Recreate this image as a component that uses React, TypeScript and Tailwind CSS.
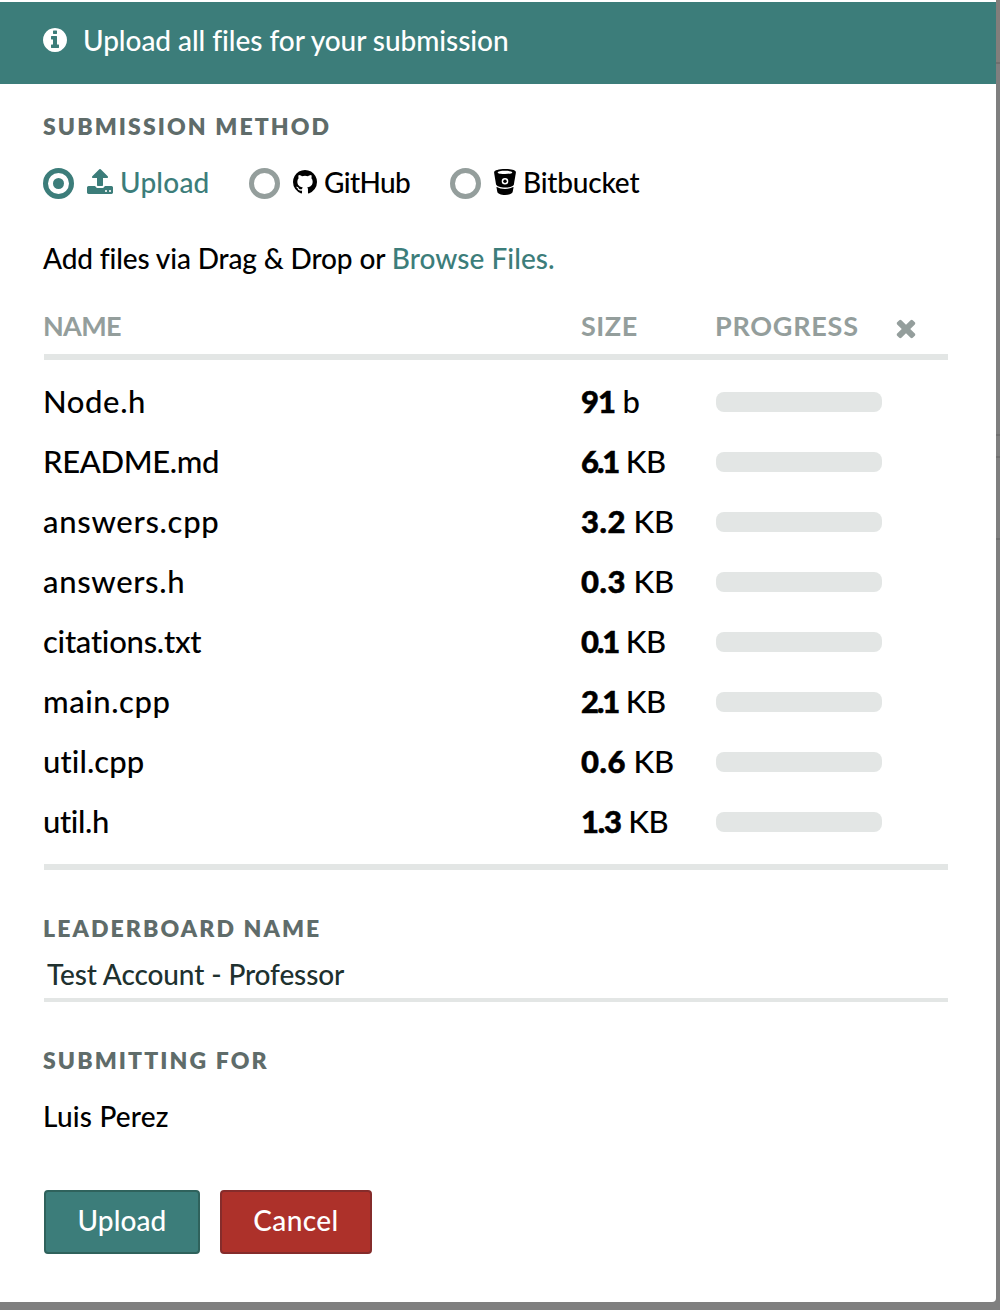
import type { ReactNode } from "react";

const ICONS = {
  info: "M1152 1376v-160q0-14-9-23t-23-9h-96v-512q0-14-9-23t-23-9h-320q-14 0-23 9t-9 23v160q0 14 9 23t23 9h96v320h-96q-14 0-23 9t-9 23v160q0 14 9 23t23 9h448q14 0 23-9t9-23zm-128-896v-160q0-14-9-23t-23-9h-192q-14 0-23 9t-9 23v160q0 14 9 23t23 9h192q14 0 23-9t9-23zm640 416q0 209-103 385.5t-279.5 279.5-385.5 103-385.5-103-279.5-279.5-103-385.5 103-385.5 279.5-279.5 385.5-103 385.5 103 279.5 279.5 103 385.5z",
  upload:
    "M1344 1472q0-26-19-45t-45-19-45 19-19 45 19 45 45 19 45-19 19-45zm256 0q0-26-19-45t-45-19-45 19-19 45 19 45 45 19 45-19 19-45zm128-224v320q0 40-28 68t-68 28h-1472q-40 0-68-28t-28-68v-320q0-40 28-68t68-28h427q21 56 70.5 92t110.5 36h256q61 0 110.5-36t70.5-92h427q40 0 68 28t28 68zm-325-648q-17 40-59 40h-256v448q0 26-19 45t-45 19h-256q-26 0-45-19t-19-45v-448h-256q-42 0-59-40-17-39 14-69l448-448q18-19 45-19t45 19l448 448q31 30 14 69z",
  github:
    "M896 128q209 0 385.5 103t279.5 279.5 103 385.5q0 251-146.5 451.5t-378.5 277.5q-27 5-40-7t-13-30q0-3 .5-76.5t.5-134.5q0-97-52-142 57-6 102.5-18t94-39 81-66.5 53-105 20.5-150.5q0-119-79-206 37-91-8-204-28-9-81 11t-92 44l-38 24q-93-26-192-26t-192 26q-16-11-42.5-27t-83.5-38.5-85-13.5q-45 113-8 204-79 87-79 206 0 85 20.5 150t52.5 105 80.5 67 94 39 102.5 18q-39 36-49 103-21 10-45 15t-57 5-65.5-21.5-55.5-62.5q-19-32-48.5-52t-49.5-24l-20-3q-21 0-29 4.5t-5 11.5 9 14 13 12l7 5q22 10 43.5 38t31.5 51l10 23q13 38 44 61.5t67 30 69.5 7 55.5-3.5l23-4q0 38 .5 88.5t.5 54.5q0 18-13 30t-40 7q-232-77-378.5-277.5t-146.5-451.5q0-209 103-385.5t279.5-279.5 385.5-103z",
  times:
    "M1490 1322q0 40-28 68l-136 136q-28 28-68 28t-68-28l-294-294-294 294q-28 28-68 28t-68-28l-136-136q-28-28-28-68t28-68l294-294-294-294q-28-28-28-68t28-68l136-136q28-28 68-28t68 28l294 294 294-294q28-28 68-28t68 28l136 136q28 28 28 68t-28 68l-294 294 294 294q28 28 28 68z",
};

function Icon({ name, className }: { name: keyof typeof ICONS; className?: string }) {
  return (
    <svg viewBox="0 0 1792 1792" className={`size-7 shrink-0 fill-current ${className ?? ""}`}>
      <path d={ICONS[name]} />
    </svg>
  );
}

function BucketIcon() {
  return (
    <svg viewBox="0 0 22 26" className="mb-0.5 h-[26px] w-[22px] shrink-0">
      <path
        fillRule="evenodd"
        fill="currentColor"
        d="M11 0C5 0 .1 1.300 .1 3.300c0 .9 1.600 9.700 2 12.200.3 1.500 4 3.100 8.900 3.100s8.600-1.600 8.900-3.100c.4-2.500 2-11.300 2-12.200C21.900 1.300 17 0 11 0zm0 1.800c4 0 7.300.7 7.300 1.600S15 5 11 5s-7.300-.7-7.300-1.600S7 1.800 11 1.800zM11 9a3.300 3.300 0 1 1 0 6.600A3.300 3.300 0 0 1 11 9z"
      />
      <circle cx="11" cy="12.300" r="1.700" fill="currentColor" />
      <path fill="currentColor" d="M2.900 18.100c2 1.200 4.900 1.900 8.100 1.900s6.100-.7 8.100-1.900c.3 0 .5.200.4.500l-.8 4.100c-.2 1.900-3.600 3.200-7.700 3.200s-7.500-1.300-7.700-3.200l-.8-4.100c-.1-.3.100-.5.400-.5z" />
    </svg>
  );
}

function Radio({ checked = false }: { checked?: boolean }) {
  return (
    <span
      className={`flex size-[31px] shrink-0 items-center justify-center rounded-full border-5 ${
        checked ? "border-[#3c7d7a]" : "border-[#949e9c]"
      }`}
    >
      {checked && <span className="size-[11px] rounded-full bg-[#3c7d7a]" />}
    </span>
  );
}

function Heading({ children, className }: { children: ReactNode; className: string }) {
  return <h2 className={`h-8 text-[23px] leading-8 font-extrabold tracking-[2.100px] text-[#5f6c6a] ${className}`}>{children}</h2>;
}

const FILES = [
  { name: "Node.h", size: "91", unit: "b", track: "tracking-[0.6px]", sizeTrack: "-tracking-[1px]" },
  { name: "README.md", size: "6.1", unit: "KB", track: "-tracking-[0.350px]", sizeTrack: "-tracking-[2px]" },
  { name: "answers.cpp", size: "3.2", unit: "KB", track: "tracking-[0.7px]", sizeTrack: "tracking-[0.600px]" },
  { name: "answers.h", size: "0.3", unit: "KB", track: "tracking-[0.65px]", sizeTrack: "tracking-[0.600px]" },
  { name: "citations.txt", size: "0.1", unit: "KB", track: "-tracking-[0.250px]", sizeTrack: "-tracking-[2px]" },
  { name: "main.cpp", size: "2.1", unit: "KB", track: "tracking-[0.550px]", sizeTrack: "-tracking-[2px]" },
  { name: "util.cpp", size: "0.6", unit: "KB", track: "tracking-[0.1px]", sizeTrack: "tracking-[0.600px]" },
  { name: "util.h", size: "1.3", unit: "KB", track: "-tracking-[0.350px]", sizeTrack: "-tracking-[1.200px]" },
];

export default function App() {
  return (
    <div className="flex h-[1310px] w-[1000px] bg-[#7f7f7f] pb-2 font-['Lato',sans-serif] text-[28px] font-medium whitespace-nowrap text-black [font-variant-ligatures:none]">
      <main className="w-[996px] rounded-br bg-white pt-0.5">
        <header className="flex h-[82px] items-center bg-[#3c7d7a] pb-1.5 pl-[41px] text-white">
          <Icon name="info" />
          <span className="ml-3.5 -tracking-[0.050px]">Upload all files for your submission</span>
        </header>

        <div className="pt-[26px] pr-12 pl-11">
          <Heading className="-ml-px">SUBMISSION METHOD</Heading>

          <div className="-ml-px mt-[25px] flex h-8 items-center">
            <div className="flex w-[206px] items-center text-[#3c7d7a]">
              <Radio checked />
              <Icon name="upload" className="ml-3 -mt-0.5" />
              <span className="mb-0.5 ml-1.5 tracking-[0.200px]">Upload</span>
            </div>
            <div className="flex w-[201px] items-center">
              <Radio />
              <Icon name="github" className="-mt-0.5 ml-[11px]" />
              <span className="mb-0.5 ml-[5px] -tracking-[0.600px]">GitHub</span>
            </div>
            <div className="flex items-center">
              <Radio />
              <span className="ml-[13px]"><BucketIcon /></span>
              <span className="mb-0.5 ml-[7px] -tracking-[0.200px]">Bitbucket</span>
            </div>
          </div>

          <p className="-ml-px mt-[43px] h-8 leading-8 -tracking-[0.130px]">
            Add files via Drag &amp; Drop or{" "}
            <a className="tracking-[0.050px] text-[#3c7d7a]">Browse Files.</a>
          </p>

          <div className="mt-[34px] flex h-[52px] border-b-6 border-[#e3e6e5] text-[27px] leading-9 font-bold text-[#949e9c]">
            <span className="-ml-px w-[538px] -tracking-[0.700px]">NAME</span>
            <span className="w-[134px] tracking-[0.500px]">SIZE</span>
            <span className="w-[176.5px] tracking-[0.750px]">PROGRESS</span>
            <Icon name="times" className="mt-1.5" />
          </div>

          <ul className="border-b-6 border-[#e3e6e5] py-3">
            {FILES.map((f) => (
              <li key={f.name} className="flex h-[60px] items-center text-[31px]">
                <span className={`mb-px -ml-px w-[538px] ${f.track}`}>{f.name}</span>
                <span className="mb-px w-[135px]">
                  <span className={`font-black [-webkit-text-stroke:0.5px_#000] ${f.sizeTrack}`}>{f.size}</span>
                  <span className="-tracking-[0.400px]"> {f.unit}</span>
                </span>
                <span className="h-5 w-[166px] rounded-lg bg-[#e3e6e5]" />
              </li>
            ))}
          </ul>

          <Heading className="mt-[42px] -ml-px">LEADERBOARD NAME</Heading>
          <div className="mt-2 h-[50px] border-b-4 border-[#e3e6e5] pt-1.5 pl-[3px] leading-8 -tracking-[0.120px] text-[#20312f]">
            Test Account - Professor
          </div>

          <Heading className="mt-[42px] -ml-px">SUBMITTING FOR</Heading>
          <p className="mt-6 -ml-px h-8 leading-8 tracking-[0.200px]">Luis Perez</p>

          <div className="mt-[58px] flex gap-5 text-white">
            <button className="h-16 w-[156px] rounded border-2 border-[#2f625c] bg-[#3c7d7a] pb-1 tracking-[0.100px]">Upload</button>
            <button className="h-16 w-[152px] rounded border-2 border-[#852c2b] bg-[#ad312a] pb-1 tracking-[0.400px]">Cancel</button>
          </div>
        </div>
      </main>
      <aside className="flex w-1 flex-col">
        <div className="h-16 border-b-2 border-[#716f6e] bg-[#827e7b]" />
        <div className="h-[372px] border-b-2 border-[#707070]" />
        <div className="h-[22px] border-b-2 border-[#707070]" />
        <div className="h-[82px] border-b-2 border-[#707070]" />
      </aside>
    </div>
  );
}
